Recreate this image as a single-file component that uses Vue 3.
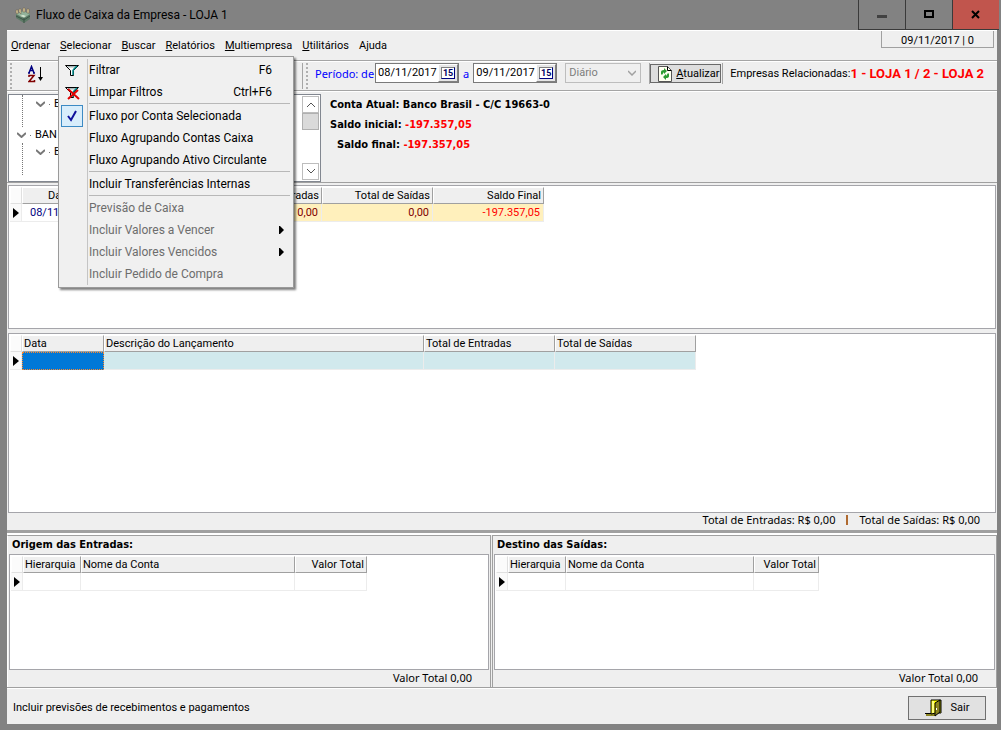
<script setup>
import { ref } from 'vue'

const menus = ['Ordenar', 'Selecionar', 'Buscar', 'Relatórios', 'Multiempresa', 'Utilitários', 'Ajuda']
const openMenu = ref('Selecionar')

const menuItems = ref([
  { id: 1, label: 'Filtrar', key: 'F6', icon: 'filter' },
  { id: 2, label: 'Limpar Filtros', key: 'Ctrl+F6', icon: 'clear' },
  { id: 3, label: 'Fluxo por Conta Selecionada', icon: 'check', line: true },
  { id: 4, label: 'Fluxo Agrupando Contas Caixa' },
  { id: 5, label: 'Fluxo Agrupando Ativo Circulante' },
  { id: 6, label: 'Incluir Transferências Internas', line: true },
  { id: 7, label: 'Previsão de Caixa', disabled: true, line: true },
  { id: 8, label: 'Incluir Valores a Vencer', disabled: true, sub: true },
  { id: 9, label: 'Incluir Valores Vencidos', disabled: true, sub: true },
  { id: 10, label: 'Incluir Pedido de Compra', disabled: true }
])

const dateFrom = ref('08/11/2017')
const dateTo = ref('09/11/2017')
const period = ref('Diário')

const accounts = [
  { title: 'Origem das Entradas:', cols: 'origin' },
  { title: 'Destino das Saídas:', cols: 'target' }
]

const toggle = (name) => {
  openMenu.value = openMenu.value === name ? '' : name
}
</script>

<template>
  <div class="window">
    <header class="titlebar">
      <svg class="app-icon" width="16" height="16" viewBox="0 0 16 16">
        <path d="M1 7l7-3 7 3v5l-6 4-8-5z" fill="#5d7a66" />
        <path d="M1 7l8 4 6-4-7-3z" fill="#93b39a" />
        <path d="M9 11v5M1 9l8 4 6-4" stroke="#3c5546" fill="none" />
        <path d="M1 6V3h2v4zM4 5V2h2v5zM8 5V1h2v4zM12 6V2h2v4z" fill="#d8c79b" stroke="#6d6049" stroke-width=".5" />
        <path d="M5 9l3-1 3 1-2 1z" fill="#dce8d6" />
      </svg>
      <h1>Fluxo de Caixa da Empresa - LOJA 1</h1>
      <div class="win-buttons">
        <button aria-label="Minimizar">
          <svg width="12" height="12"><path d="M1 6h10v3H1z" fill="#414141" /></svg>
        </button>
        <button aria-label="Maximizar">
          <svg width="12" height="12"><path d="M2 2h8v6H2z" fill="none" stroke="#000" stroke-width="2" /></svg>
        </button>
        <button class="close" aria-label="Fechar">
          <svg width="12" height="12"><path d="M2 2l7 7M9 2L2 9" stroke="#000" stroke-width="2" /></svg>
        </button>
      </div>
    </header>

    <main class="content">
      <nav class="menubar">
        <div v-for="name in menus" :key="name" class="menu">
          <button class="menu-name" :class="{ plain: name === 'Ajuda' }" @click="toggle(name)"><u>{{ name[0] }}</u>{{ name.slice(1) }}</button>
          <div v-if="name === 'Selecionar' && openMenu === name" class="dropdown">
            <button
              v-for="item in menuItems"
              :key="item.id"
              class="item"
              :class="{ line: item.line }"
              :disabled="item.disabled"
            >
              <span class="item-icon" :class="{ checked: item.icon === 'check' }">
                <svg v-if="item.icon === 'check'" width="16" height="16">
                  <path d="M4 8l3 4 5-9" fill="none" stroke="#0f109c" stroke-width="2" />
                </svg>
                <svg v-else-if="item.icon" width="16" height="16">
                  <path d="M1.500 3.500h13l-5 5v5h-3v-5z" fill="#fff" stroke="#000" />
                  <path d="M3 4h10l-1 1.500H4.500z" fill="#a9b8ba" />
                  <path d="M9 8l4-4M9 8v5" stroke="#008b8b" stroke-width="1.500" />
                  <path v-if="item.icon === 'clear'" d="M4 5l11 10M14 6L4 15" stroke="#e00000" stroke-width="2" />
                </svg>
              </span>
              <span class="item-label">{{ item.label }}</span>
              <span v-if="item.key" class="item-key">{{ item.key }}</span>
              <svg v-if="item.sub" class="item-sub" width="5" height="8"><path d="M0 0h1l4 4-4 4H0z" /></svg>
            </button>
          </div>
        </div>
        <div class="today">09/11/2017 | 0</div>
      </nav>

      <div class="toolbar">
        <div class="tool-group first">
          <i class="grip"></i>
          <button class="sort" aria-label="Ordenar">
            <svg width="16" height="18">
              <path d="M1 8l2.500-6.500L6 8M2 5.500h3M0 8h2M5 8h2" fill="none" stroke="#000080" stroke-width="1.500" />
              <path d="M1 12v-1.500h5L1 16.500h5.500V15" fill="none" stroke="#800000" stroke-width="1.500" />
              <path d="M12 2h1v10h2l-2.500 4-2.500-4h2z" />
            </svg>
          </button>
        </div>
        <div class="tool-group">
          <i class="grip"></i>
          <label class="blue" for="from">Período: de</label>
          <span class="date">
            <input id="from" v-model="dateFrom" type="text" />
            <button aria-label="Calendário inicial"><b>15</b></button>
          </span>
          <label class="blue" for="to">a</label>
          <span class="date">
            <input id="to" v-model="dateTo" type="text" />
            <button aria-label="Calendário final"><b>15</b></button>
          </span>
          <span class="select">
            <select v-model="period" aria-label="Período" disabled>
              <option>Diário</option>
            </select>
            <svg width="8" height="6"><path d="M0 1l4 4 4-4" fill="none" stroke="#a0a0a0" stroke-width="1.500" /></svg>
          </span>
          <span class="refresh-slot">
            <button class="refresh">
              <svg width="14" height="16">
                <path d="M.5.5h9l4 4v11H.5z" fill="#fffff0" stroke="#555" />
                <path d="M9.500.5v4h4" fill="none" stroke="#000" />
                <path d="M3 8V6q0-2 3-2V2l3 3-3 3V6L4 9z" fill="#2c9c31" />
                <path d="M11 8v2q0 2-3 2v2l-3-3 3-3v2l2-3z" fill="#2c9c31" />
              </svg>
              <span><u>A</u>tualizar</span>
            </button>
          </span>
          <span class="related">Empresas Relacionadas:<strong>1 - LOJA 1 / 2 - LOJA 2</strong></span>
        </div>
      </div>

      <section class="summary">
        <div class="tree">
          <ul>
            <li class="leaf"><svg width="9" height="6"><path d="M0 1l4.500 4L9 1" /></svg><i></i>E</li>
            <li><svg width="9" height="6"><path d="M0 1l4.500 4L9 1" /></svg><i></i>BAN</li>
            <li class="leaf"><svg width="9" height="6"><path d="M0 1l4.500 4L9 1" /></svg><i></i>E</li>
          </ul>
          <div class="scrollbar">
            <button aria-label="Subir"><svg width="8" height="5"><path d="M0 5l4-4 4 4" /></svg></button>
            <div class="thumb"></div>
            <button aria-label="Descer"><svg width="8" height="5"><path d="M0 0l4 4 4-4" /></svg></button>
          </div>
        </div>
        <div class="balance">
          <p>Conta Atual: Banco Brasil - C/C 19663-0</p>
          <p>Saldo inicial: <span>-197.357,05</span></p>
          <p class="final">Saldo final: <span>-197.357,05</span></p>
        </div>
      </section>

      <section class="box flow">
        <table class="grid flow-grid">
          <colgroup><col class="mark" /><col class="day" /><col class="opening" /><col class="total" /><col class="total" /><col class="total" /></colgroup>
          <thead>
            <tr><th></th><th class="center">Data</th><th></th><th class="right">Total de Entradas</th><th class="right">Total de Saídas</th><th class="right">Saldo Final</th></tr>
          </thead>
          <tbody>
            <tr>
              <td><svg width="6" height="10"><path d="M0 0l6 5-6 5z" /></svg></td>
              <td class="navy">08/11/2017</td>
              <td class="cream"></td>
              <td class="cream right">0,00</td>
              <td class="cream right">0,00</td>
              <td class="cream right negative">-197.357,05</td>
            </tr>
          </tbody>
        </table>
      </section>

      <section class="box entries">
        <table class="grid entries-grid">
          <colgroup><col class="mark" /><col class="date-col" /><col class="description" /><col class="income" /><col class="outcome" /></colgroup>
          <thead>
            <tr><th></th><th>Data</th><th>Descrição do Lançamento</th><th>Total de Entradas</th><th>Total de Saídas</th></tr>
          </thead>
          <tbody>
            <tr>
              <td><svg width="6" height="10"><path d="M0 0l6 5-6 5z" /></svg></td>
              <td class="selected"></td><td class="ice"></td><td class="ice"></td><td class="ice"></td>
            </tr>
          </tbody>
        </table>
      </section>
      <div class="totals">
        <span>Total de Entradas: R$ 0,00</span>
        <i></i>
        <span>Total de Saídas: R$ 0,00</span>
      </div>

      <section class="accounts">
        <div v-for="acc in accounts" :key="acc.title" class="account">
          <h2>{{ acc.title }}</h2>
          <div class="box">
            <table class="grid" :class="acc.cols">
              <colgroup><col class="mark" /><col class="level" /><col class="name" /><col class="value" /></colgroup>
              <thead>
                <tr><th></th><th>Hierarquia</th><th>Nome da Conta</th><th class="right">Valor Total</th></tr>
              </thead>
              <tbody>
                <tr>
                  <td><svg width="6" height="10"><path d="M0 0l6 5-6 5z" /></svg></td>
                  <td></td><td></td><td></td>
                </tr>
              </tbody>
            </table>
          </div>
          <p>Valor Total 0,00</p>
        </div>
      </section>

      <footer class="footer">
        <span>Incluir previsões de recebimentos e pagamentos</span>
        <button class="exit">
          <svg width="18" height="18">
            <path d="M1 15h9v2H1z" fill="#8a8320" />
            <path d="M0 14.500h6" stroke="#000" />
            <path d="M6 1h10v13h-5L6 15z" fill="#ffff00" stroke="#000" />
            <path d="M8 2v12" stroke="#fff" />
            <path d="M10 4l5-3v12l-5 4z" fill="#8a8320" stroke="#000" />
            <path d="M11.500 9v2" stroke="#fff" />
          </svg>
          <span>Sair</span>
        </button>
      </footer>
    </main>
  </div>
</template>

<style>
body {
  margin: 0;
  background: #828282;
}
</style>

<style scoped>
.window {
  display: flex;
  flex-direction: column;
  box-sizing: border-box;
  min-height: 100vh;
  padding: 0 4px 6px 7px;
  background: #828282;
  font-family: Roboto, "Liberation Sans", sans-serif;
  font-size: 11px;
  line-height: 14px;
  color: #000;
}
.window * {
  box-sizing: border-box;
}
button,
input,
select {
  margin: 0;
  padding: 0;
  border: 0;
  background: none;
  font: inherit;
  color: inherit;
}
h1,
h2,
p,
ul {
  margin: 0;
  padding: 0;
}

/* title bar */
.titlebar {
  display: flex;
  align-items: center;
  height: 30px;
  padding-left: 8px;
}
.titlebar h1 {
  flex: 1;
  padding-left: 5px;
  font-size: 12px;
  font-weight: normal;
}
.win-buttons {
  display: flex;
  align-self: flex-start;
  height: 30px;
  margin-right: -2px;
}
.win-buttons button {
  display: flex;
  align-items: center;
  justify-content: center;
  width: 47px;
  border: 1px solid #3a3a3a;
  border-width: 0 0 1px 1px;
}
.win-buttons .close {
  background: #c1554d;
}

.content {
  flex: 1;
  display: flex;
  flex-direction: column;
  min-height: 0;
  background: #efefef;
  border-top: 1px solid #fff;
}

/* menu bar */
.menubar {
  display: flex;
  align-items: center;
  gap: 10px;
  height: 30px;
  padding-left: 4px;
  border-bottom: 1px solid #a5a5a5;
}
.menu {
  position: relative;
}
.menu-name {
  display: block;
}
.menu-name.plain u {
  text-decoration: none;
}
.today {
  align-self: flex-start;
  width: 113px;
  height: 17px;
  margin: 0 3px 0 auto;
  border: 1px solid #a0a0a0;
  border-top: 0;
  line-height: 19px;
  text-align: center;
}
.dropdown {
  position: absolute;
  z-index: 5;
  left: -2px;
  top: 17px;
  width: 236px;
  padding: 2px 0;
  background: linear-gradient(#c4c4c4, #c4c4c4) 28px 2px / 1px calc(100% - 4px) no-repeat #f0f0f0;
  border: 1px solid #9a9a9a;
  box-shadow: 2px 2px 2px rgba(0, 0, 0, 0.5);
  font-size: 12px;
}
.item {
  display: flex;
  align-items: center;
  width: 100%;
  height: 22px;
  padding: 0 9px 0 2px;
  text-align: left;
}
.item.line {
  height: 24px;
  padding-top: 2px;
  background: linear-gradient(#b8b8b8, #b8b8b8) 30px 0 / 201px 1px no-repeat;
}
.item:disabled {
  color: #6d6d6d;
}
.item-icon {
  display: flex;
  align-items: center;
  justify-content: center;
  width: 22px;
  height: 22px;
}
.item-icon.checked {
  background: #d8edfb;
  border: 1px solid #3c8ac4;
}
.item-label {
  flex: 1;
  padding-left: 6px;
}
.item-key {
  padding-right: 12px;
}
.item-sub {
  fill: #000;
}

/* toolbar */
.toolbar {
  display: flex;
  height: 30px;
  padding-top: 1px;
  border-top: 1px solid #fff;
  border-bottom: 1px solid #a5a5a5;
}
.tool-group {
  flex: 1;
  display: flex;
  align-items: flex-start;
  height: 26px;
}
.tool-group.first {
  flex: 0 0 296px;
  border-right: 1px solid #a5a5a5;
}
.grip {
  width: 2px;
  height: 26px;
  margin: 0 7px 0 3px;
  background: repeating-linear-gradient(#b0b0b0 0 2px, transparent 2px 4px);
}
.sort {
  margin: 2px 0 0 9px;
}
.blue {
  color: #0000ff;
  font: 11px/22px "Noto Sans", sans-serif;
}
.date {
  display: flex;
  width: 84px;
  height: 20px;
  margin: 0 4px 0 1px;
  background: #fff;
  border: 1px solid #7a7a7a;
}
.date + .blue + .date {
  margin: 0 8px 0 4px;
}
.date input {
  width: 62px;
  padding-left: 2px;
}
.date button {
  flex: 1;
  padding: 2px;
  background: #e6e6e6;
  border: 1px solid #fff;
  border-right-color: #808080;
  border-bottom-color: #808080;
}
.date b {
  display: block;
  height: 12px;
  background: #fff;
  border: 1px solid #808080;
  border-right-color: #000080;
  border-bottom-color: #000080;
  color: #000060;
  font-size: 9px;
  line-height: 10px;
}
.select {
  display: flex;
  align-items: center;
  width: 76px;
  height: 20px;
  border: 1px solid #bdbdbd;
}
.select select {
  flex: 1;
  height: 18px;
  margin-right: -14px;
  padding-left: 3px;
  appearance: none;
  background: transparent;
  color: #7d7d7d;
  opacity: 1;
}
.select svg {
  flex: none;
  margin-right: 4px;
}
.refresh-slot {
  height: 21px;
  margin-left: 8px;
  padding: 1px 1px 0 0;
  border: 1px solid #a5a5a5;
  border-width: 0 1px;
}
.refresh {
  display: flex;
  align-items: center;
  gap: 4px;
  width: 71px;
  height: 19px;
  padding-left: 7px;
  background: #dedede;
  border: 1px solid #6a6a6a;
}
.related {
  display: flex;
  padding-left: 7px;
  line-height: 22px;
  white-space: nowrap;
}
.related strong {
  color: #ff0000;
  font-size: 13px;
}

/* account tree and balance */
.summary {
  display: flex;
  height: 92px;
  padding: 2px 0 0 1px;
  border-top: 1px solid #fff;
  border-bottom: 1px solid #a0a0a0;
}
.tree {
  display: flex;
  flex: 0 0 313px;
  height: 88px;
  background: #fff;
  border: 1px solid #828790;
}
.tree ul {
  flex: 1;
  padding-left: 8px;
  list-style: none;
}
.tree li {
  display: flex;
  align-items: center;
  gap: 4px;
  height: 16px;
}
.tree li svg {
  fill: none;
  stroke: #777;
  stroke-width: 2;
}
.tree li i {
  width: 1px;
  height: 1px;
  background: #777;
}
.tree .leaf {
  height: 32px;
  margin-left: 5px;
  padding: 0 0 14px 13px;
  border-left: 1px dotted #777;
}
.scrollbar {
  display: flex;
  flex-direction: column;
  width: 18px;
  padding: 1px 1px 1px 0;
}
.scrollbar button {
  display: flex;
  align-items: center;
  justify-content: center;
  height: 17px;
  border: 1px solid #bdbdbd;
}
.scrollbar button svg {
  fill: none;
  stroke: #555;
}
.thumb {
  height: 17px;
  margin-bottom: auto;
  background: #dadada;
  border: 1px solid #b0b0b0;
}
.balance {
  padding: 1px 0 0 9px;
  font: bold 11px/20px "DejaVu Sans Condensed", "DejaVu Sans", sans-serif;
}
.balance .final {
  padding-left: 7px;
}
.balance span {
  color: #ff0000;
}

/* grids */
.box {
  margin: 0 1px;
  padding: 1px;
  background: #fff;
  border: 1px solid #a5a5aa;
}
.flow {
  flex: 140 1 0;
  margin-top: 2px;
}
.entries {
  flex: 176 1 0;
  margin-top: 4px;
}
.grid {
  table-layout: fixed;
  border-collapse: separate;
  border-spacing: 0;
}
.grid th {
  height: 17px;
  padding: 0 2px 0 1px;
  background: #efefef;
  border: 1px solid #fff;
  border-right-color: #a0a0a0;
  border-bottom-color: #a0a0a0;
  font-weight: normal;
  line-height: 14px;
  text-align: left;
  white-space: nowrap;
}
.grid td {
  height: 18px;
  padding: 1px 3px 0;
  border: 1px solid #ececec;
  border-width: 0 1px 1px 0;
  line-height: 14px;
}
.grid th:first-child {
  background: #fbfbfb;
  border-color: #fff #e0e0e0 #e0e0e0 #fff;
}
.grid td:first-child {
  background: #fafafa;
}
.grid td svg {
  display: block;
}
.grid .right {
  text-align: right;
}
.grid .center {
  text-align: center;
}
.mark {
  width: 12px;
}
.flow-grid {
  width: 534px;
}
.day {
  width: 76px;
}
.opening {
  width: 113px;
}
.total {
  width: 111px;
}
.grid .navy {
  padding-left: 8px;
  color: #000080;
}
.cream {
  background: #fff0bc;
  color: #800000;
}
.cream.negative {
  color: #ff0000;
}
.entries-grid {
  width: 686px;
}
.date-col {
  width: 82px;
}
.description {
  width: 320px;
}
.income {
  width: 131px;
}
.outcome {
  width: 141px;
}
.grid .selected {
  background: #0078d7;
  border: 1px dotted #ff8728;
}
.ice {
  background: #d1e9ed;
}

.totals {
  display: flex;
  align-items: center;
  justify-content: flex-end;
  gap: 11px;
  height: 20px;
  padding: 0 17px 3px 0;
  border-bottom: 3px solid #a0a0a0;
  font: 11px/16px "Noto Sans", sans-serif;
}
.totals i {
  width: 2px;
  height: 10px;
  background: #b06a30;
}

/* accounts */
.accounts {
  flex: 152 1 0;
  display: flex;
  border-top: 2px solid #fff;
  border-bottom: 1px solid #a0a0a0;
}
.account {
  display: flex;
  flex-direction: column;
  flex: 483 1 0;
  border: 1px solid #a0a0a0;
  border-bottom: 0;
  border-left-color: #fff;
}
.account + .account {
  flex-grow: 504;
  border-left: 1px solid #a0a0a0;
  margin-left: 1px;
}
.account h2 {
  padding-left: 4px;
  font: bold 11px/18px "DejaVu Sans Condensed", "DejaVu Sans", sans-serif;
}
.account .box {
  flex: 1;
}
.account p {
  padding: 0 18px 2px 0;
  font: 11px/15px "Noto Sans", sans-serif;
  text-align: right;
}
.origin {
  width: 356px;
}
.target {
  width: 323px;
}
.level {
  width: 58px;
}
.origin .name {
  width: 214px;
}
.origin .value {
  width: 72px;
}
.target .name {
  width: 188px;
}
.target .value {
  width: 65px;
}

.footer {
  display: flex;
  align-items: center;
  justify-content: space-between;
  height: 36px;
  padding: 3px 11px 0 6px;
  border-top: 1px solid #fff;
}
.exit {
  display: flex;
  align-items: center;
  justify-content: center;
  gap: 8px;
  width: 78px;
  height: 24px;
  background: #e1e1e1;
  border: 1px solid #707070;
}
</style>
